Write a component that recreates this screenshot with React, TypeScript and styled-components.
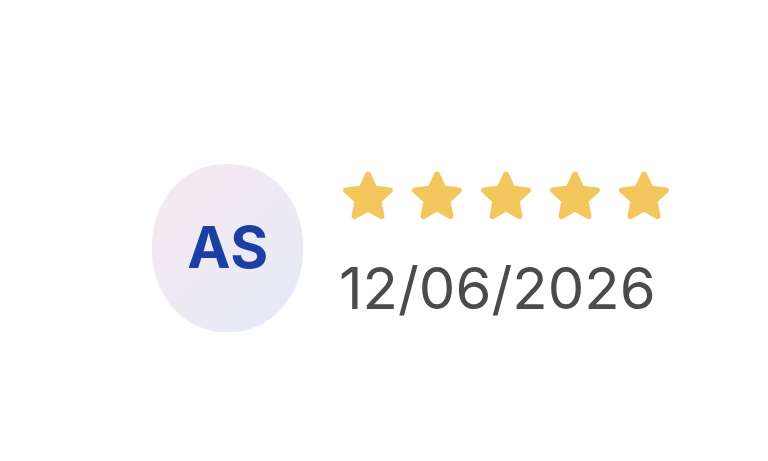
import styled, { createGlobalStyle } from "styled-components";

const GlobalStyle = createGlobalStyle`
  html, body {
    margin: 0;
    padding: 0;
    background: #ffffff;
  }
  body {
    font-family: Inter, "Liberation Sans", sans-serif;
  }
`;

const Page = styled.div`
  width: 768px;
  height: 461px;
  box-sizing: border-box;
  padding: 164px 0 0 152px;
  display: flex;
  align-items: flex-start;
  gap: 38px;
`;

const Avatar = styled.div`
  width: 151px;
  height: 168px;
  border-radius: 48%;
  background: linear-gradient(135deg, #f6e8ee 0%, #eeeaf4 50%, #e4e9f9 100%);
  display: flex;
  align-items: center;
  justify-content: center;
  flex-shrink: 0;
`;

const Initials = styled.span`
  font-family: Inter, "Liberation Sans", sans-serif;
  font-weight: 700;
  font-size: 58px;
  color: #1c3fa3;
  letter-spacing: 0.5px;
  margin-left: 1px;
  margin-top: -2px;
`;

const Details = styled.div`
  display: flex;
  flex-direction: column;
  padding-top: 2px;
  gap: 33px;
`;

const Stars = styled.div`
  display: flex;
  gap: 9px;
  margin-left: -3px;
`;

const DateText = styled.div`
  font-family: Inter, "Liberation Sans", sans-serif;
  font-size: 58px;
  font-weight: 400;
  color: #4b4b4b;
  line-height: 1;
  margin-left: -2px;
`;

// five-point star with a wide inner radius and rounded tips
function Star() {
  return (
    <svg width="60" height="60" viewBox="0 0 24 24" aria-hidden="true">
      <path
        d="M12 3.4L14.59 9.04 20.75 9.76 16.18 13.96 17.41 20.04 12 17 6.59 20.04 7.82 13.96 3.25 9.76 9.41 9.04z"
        fill="#f3c75d"
        stroke="#f3c75d"
        strokeWidth="2.4"
        strokeLinejoin="round"
      />
    </svg>
  );
}

export default function App() {
  return (
    <>
      <GlobalStyle />
      <Page>
        <Avatar>
          <Initials>AS</Initials>
        </Avatar>
        <Details>
          <Stars>
            {[0, 1, 2, 3, 4].map((i) => (
              <Star key={i} />
            ))}
          </Stars>
          <DateText>12/06/2026</DateText>
        </Details>
      </Page>
    </>
  );
}
